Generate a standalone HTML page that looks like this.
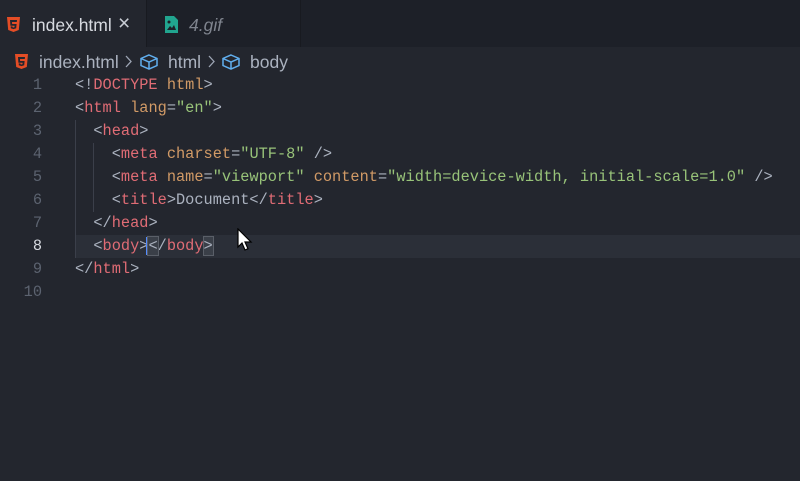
<!DOCTYPE html>
<html><head><style>
body{margin:0;width:800px;height:481px;background:#23262e;overflow:hidden;font-family:"Liberation Sans",sans-serif;position:relative}
.tabs{position:absolute;top:0;left:0;width:800px;height:47px;background:#1d2028}
.tab{position:absolute;top:0;height:47px;box-sizing:border-box}
.t1{left:0;width:147px;background:#23262e;border-right:1px solid #181a20}
.t2{left:147px;width:154px;border-right:1px solid #181a20}
.lbl{position:absolute;top:15px;font-size:17.5px;color:#d7dae0}
.bc{position:absolute;top:52px;left:0;height:20px;font-size:17.5px;color:#abb2bf}
.code{position:absolute;left:0;top:74px;font-family:"Liberation Mono",monospace;font-size:15.3px}
.ln{position:absolute;left:0;width:42px;text-align:right;color:#5c6370;height:23px;line-height:23px}
.l{position:absolute;left:75px;height:23px;line-height:23px;white-space:pre;color:#abb2bf}
.t{color:#e06c75}.a{color:#d19a66}.s{color:#98c379}
.g{position:absolute;width:1px;background:#3b3f4a}
</style></head><body>
<div class="tabs">
 <div class="tab t1">
  <svg style="position:absolute;left:7px;top:17px" width="13" height="15" viewBox="0 0 13 15"><path d="M0 0h13l-1.2 13L6.5 15 1.2 13z" fill="#e44d26"/><path d="M3 3h7l-.2 2H5l.1 2h4.5l-.4 4.2-2.7.9-2.7-.9-.1-1.8h1.7l.1.7 1 .4 1-.4.1-1.3H3.4z" fill="#23262e"/></svg>
  <span class="lbl" style="left:32px">index.html</span>
  <span class="lbl" style="left:118px;top:12px;font-size:21px;color:#c8ccd4">×</span>
 </div>
 <div class="tab t2">
  <svg style="position:absolute;left:18px;top:16px" width="13" height="17" viewBox="0 0 13 17"><path d="M0 0h9l4 4v13H0z" fill="#21a58f"/><path d="M2 14l3-4 2 2 2-3 2 5z" fill="#1d2028"/><circle cx="4" cy="6" r="1.5" fill="#1d2028"/></svg>
  <span class="lbl" style="left:42px;color:#7f848e;font-style:italic">4.gif</span>
 </div>
</div>
<div class="bc">
 <svg style="position:absolute;left:15px;top:2px" width="13" height="15" viewBox="0 0 13 15"><path d="M0 0h13l-1.2 13L6.5 15 1.2 13z" fill="#e44d26"/><path d="M3 3h7l-.2 2H5l.1 2h4.5l-.4 4.2-2.7.9-2.7-.9-.1-1.8h1.7l.1.7 1 .4 1-.4.1-1.3H3.4z" fill="#23262e"/></svg>
 <span style="position:absolute;left:39px;top:0">index.html</span>
 <svg style="position:absolute;left:125px;top:3px" width="8" height="13" viewBox="0 0 8 13"><path d="M1 1l5 5.5L1 12" fill="none" stroke="#9da5b4" stroke-width="1.3"/></svg>
 <svg style="position:absolute;left:140px;top:2px" width="18" height="16" viewBox="0 0 18 16"><path d="M9 1l8 3.5v7L9 15 1 11.5v-7zM1 4.5L9 8l8-3.5M9 8v7" fill="none" stroke="#61afef" stroke-width="1.5"/></svg>
 <span style="position:absolute;left:168px;top:0">html</span>
 <svg style="position:absolute;left:208px;top:3px" width="8" height="13" viewBox="0 0 8 13"><path d="M1 1l5 5.5L1 12" fill="none" stroke="#9da5b4" stroke-width="1.3"/></svg>
 <svg style="position:absolute;left:222px;top:2px" width="18" height="16" viewBox="0 0 18 16"><path d="M9 1l8 3.5v7L9 15 1 11.5v-7zM1 4.5L9 8l8-3.5M9 8v7" fill="none" stroke="#61afef" stroke-width="1.5"/></svg>
 <span style="position:absolute;left:250px;top:0">body</span>
</div>
<div style="position:absolute;left:76px;top:235px;width:724px;height:23px;background:#2b2f38"></div>
<div class="g" style="left:75px;top:120px;height:138px"></div>
<div class="g" style="left:93px;top:143px;height:69px"></div>
<div class="code">
 <div class="ln" style="top:0">1</div><div class="ln" style="top:23px">2</div><div class="ln" style="top:46px">3</div><div class="ln" style="top:69px">4</div><div class="ln" style="top:92px">5</div><div class="ln" style="top:115px">6</div><div class="ln" style="top:138px">7</div><div class="ln" style="top:161px;color:#d7dae0">8</div><div class="ln" style="top:184px">9</div><div class="ln" style="top:207px">10</div>
 <div class="l" style="top:0">&lt;!<span class="t">DOCTYPE</span> <span class="a">html</span>&gt;</div>
 <div class="l" style="top:23px">&lt;<span class="t">html</span> <span class="a">lang</span>=<span class="s">"en"</span>&gt;</div>
 <div class="l" style="top:46px">  &lt;<span class="t">head</span>&gt;</div>
 <div class="l" style="top:69px">    &lt;<span class="t">meta</span> <span class="a">charset</span>=<span class="s">"UTF-8"</span> /&gt;</div>
 <div class="l" style="top:92px">    &lt;<span class="t">meta</span> <span class="a">name</span>=<span class="s">"viewport"</span> <span class="a">content</span>=<span class="s">"width=device-width, initial-scale=1.0"</span> /&gt;</div>
 <div class="l" style="top:115px">    &lt;<span class="t">title</span>&gt;Document&lt;/<span class="t">title</span>&gt;</div>
 <div class="l" style="top:138px">  &lt;/<span class="t">head</span>&gt;</div>
 <div class="l" style="top:161px">  &lt;<span class="t">body</span>&gt;<span style="background:#3a3f48;outline:1px solid #5a5f68;box-shadow:-2px 0 0 #528bff">&lt;</span>/<span class="t">body</span><span style="background:#3a3f48;outline:1px solid #5a5f68">&gt;</span></div>
 <div class="l" style="top:184px">&lt;/<span class="t">html</span>&gt;</div>
</div>
<svg style="position:absolute;left:237px;top:228px" width="16" height="24" viewBox="0 0 16 24"><path d="M1 1v18l4-4 3 7 3-1.3-3-6.7h6z" fill="#fff" stroke="#000" stroke-width="1.2"/></svg>
</body></html>
